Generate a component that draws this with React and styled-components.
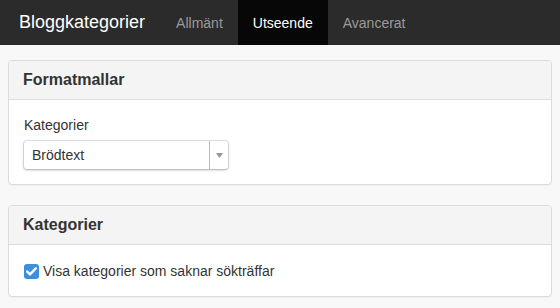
import styled, { createGlobalStyle } from 'styled-components'

const Global = createGlobalStyle`
  html, body { margin: 0; padding: 0; background: #f8f8f8; }
  body { font-family: "Liberation Sans", Arial, sans-serif; color: #333; }
`

export default function App() {
  return <Page>
    <Global />
    <Navbar>
      <Brand>Bloggkategorier</Brand>
      <Tab>Allmänt</Tab>
      <Tab active>Utseende</Tab>
      <Tab>Avancerat</Tab>
    </Navbar>
    <Content>
      <Panel>
        <PanelHeading>Formatmallar</PanelHeading>
        <PanelBody>
          <Label>Kategorier</Label>
          <Select>
            <SelectValue>Brödtext</SelectValue>
            <SelectArrow>
              <svg width='7' height='5' viewBox='0 0 7 5'>
                <path d='M0 0h7L3.5 5z' fill='#999' />
              </svg>
            </SelectArrow>
          </Select>
        </PanelBody>
      </Panel>
      <Panel>
        <PanelHeading>Kategorier</PanelHeading>
        <PanelBody>
          <CheckRow>
            <Checkbox>
              <svg width='11' height='9' viewBox='0 0 11 9'>
                <path d='M1.2 4.6l2.8 2.8L9.8 1.4' stroke='#fff' strokeWidth='2.4' fill='none' strokeLinecap='round' strokeLinejoin='round' />
              </svg>
            </Checkbox>
            <span>Visa kategorier som saknar sökträffar</span>
          </CheckRow>
        </PanelBody>
      </Panel>
    </Content>
  </Page>
}

const Page = styled.div`
  width: 560px;
  min-height: 308px;
  background: #f8f8f8;
`
const Navbar = styled.div`
  display: flex;
  align-items: stretch;
  height: 45px;
  background: #2b2b2b;
`
const Brand = styled.div`
  display: flex;
  align-items: center;
  padding: 0 19px;
  font-size: 18px;
  color: #fff;
  margin-right: -3px;
`
const Tab = styled.div`
  display: flex;
  align-items: center;
  padding: 0 15px;
  font-size: 14px;
  color: ${p => p.active ? '#fff' : '#9a9a9a'};
  background: ${p => p.active ? '#070707' : 'transparent'};
`
const Content = styled.div`
  display: flex;
  flex-direction: column;
  gap: 20px;
  padding: 15px 8px 0;
`
const Panel = styled.div`
  background: #fff;
  border: 1px solid #dcdcdc;
  border-radius: 4px;
  box-shadow: 0 1px 1px rgba(0,0,0,.04);
  overflow: hidden;
`
const PanelHeading = styled.div`
  background: #f4f4f4;
  border-bottom: 1px solid #dcdcdc;
  height: 38px;
  display: flex;
  align-items: center;
  padding: 0 14px;
  font-size: 16px;
  font-weight: bold;
  color: #333;
`
const PanelBody = styled.div`
  padding: 16px 15px 15px;
`
const Label = styled.div`
  font-size: 14px;
  color: #333;
  margin: 1px 0 8px;
`
const Select = styled.div`
  display: flex;
  width: 204px;
  height: 28px;
  box-sizing: border-box;
  border-radius: 3px;
  background: #fff;
  box-shadow: 0 0 0 1px rgba(0,0,0,.1), 0 1px 3px rgba(0,0,0,.25);
`
const SelectValue = styled.div`
  flex: 1;
  display: flex;
  align-items: center;
  padding-left: 8px;
  font-size: 14px;
  color: #333;
`
const SelectArrow = styled.div`
  width: 18px;
  display: flex;
  align-items: center;
  justify-content: center;
  border-left: 1px solid #bbb;
`
const CheckRow = styled.label`
  display: flex;
  align-items: center;
  gap: 4px;
  font-size: 14px;
  color: #333;
  padding: 2px 0 2px;
`
const Checkbox = styled.span`
  width: 15px;
  height: 15px;
  border-radius: 3px;
  background: #3b8fe0;
  display: flex;
  align-items: center;
  justify-content: center;
`
